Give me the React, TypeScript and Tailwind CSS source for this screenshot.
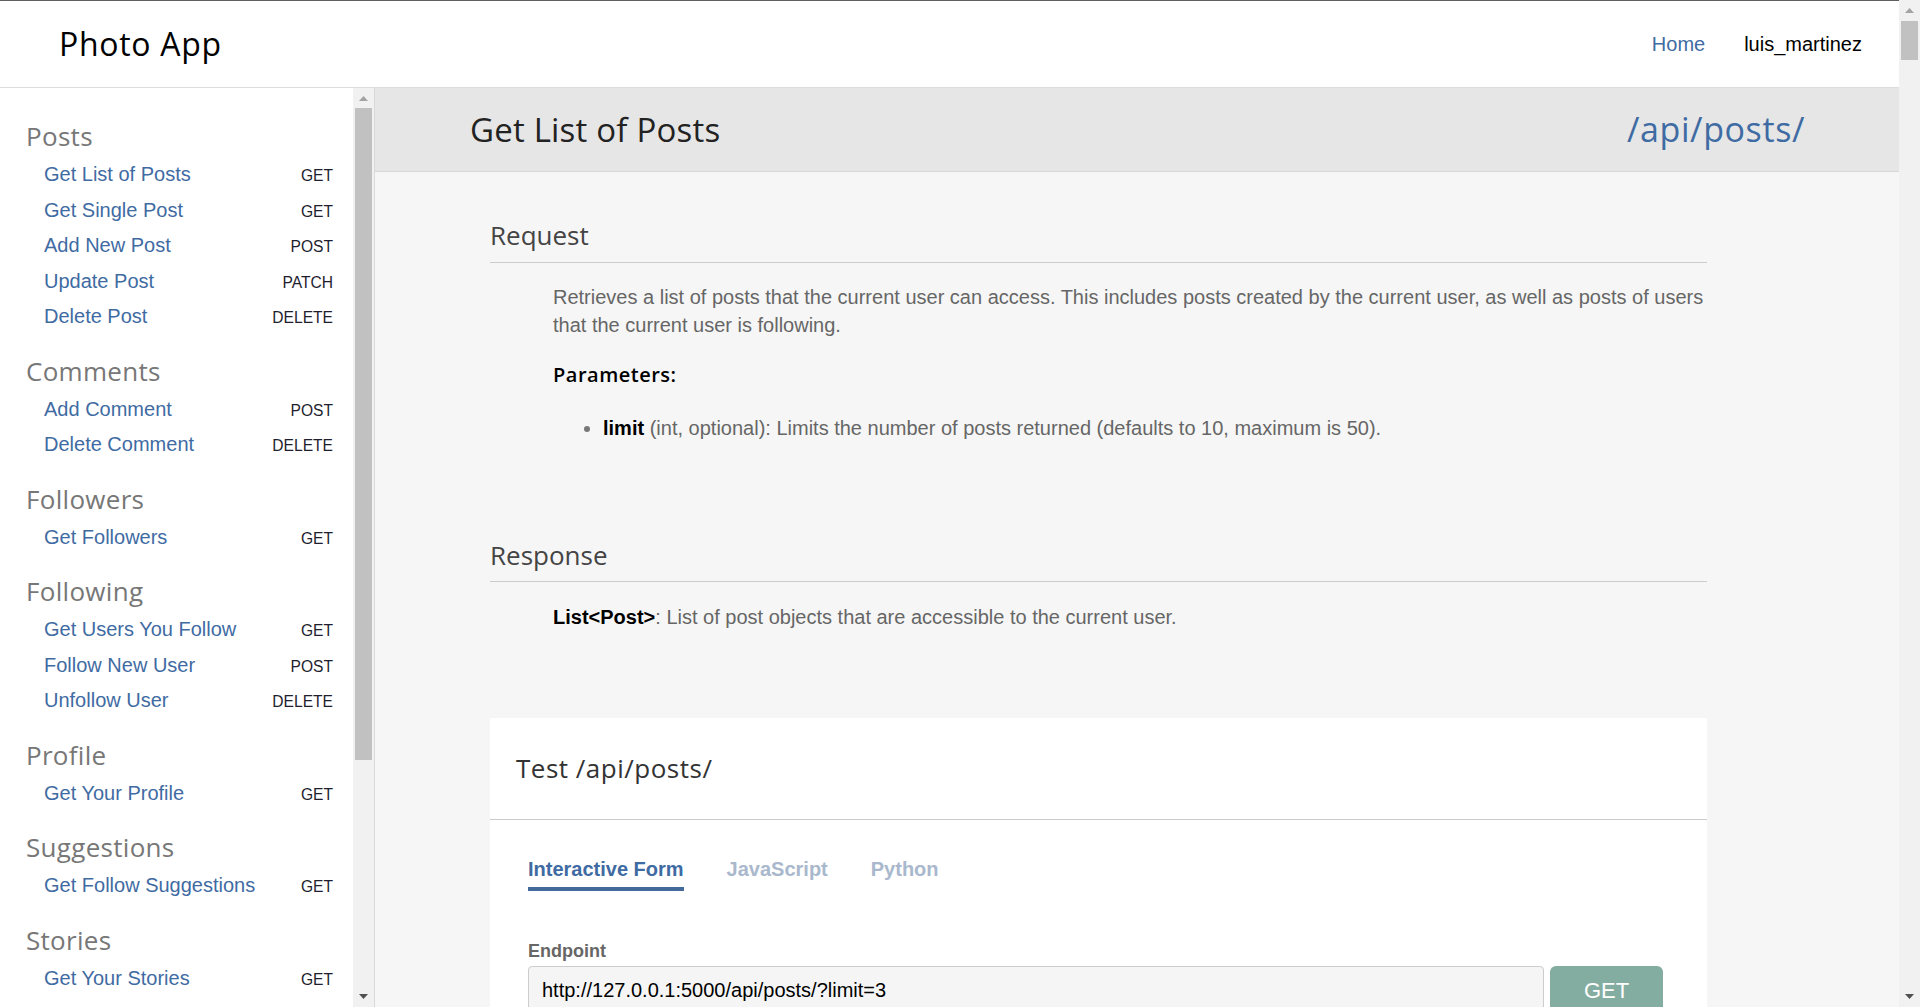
import React from "react";

type Endpoint = { name: string; method: string };
type Section = { title: string; items: Endpoint[] };

const sections: Section[] = [
  {
    title: "Posts",
    items: [
      { name: "Get List of Posts", method: "GET" },
      { name: "Get Single Post", method: "GET" },
      { name: "Add New Post", method: "POST" },
      { name: "Update Post", method: "PATCH" },
      { name: "Delete Post", method: "DELETE" },
    ],
  },
  {
    title: "Comments",
    items: [
      { name: "Add Comment", method: "POST" },
      { name: "Delete Comment", method: "DELETE" },
    ],
  },
  { title: "Followers", items: [{ name: "Get Followers", method: "GET" }] },
  {
    title: "Following",
    items: [
      { name: "Get Users You Follow", method: "GET" },
      { name: "Follow New User", method: "POST" },
      { name: "Unfollow User", method: "DELETE" },
    ],
  },
  { title: "Profile", items: [{ name: "Get Your Profile", method: "GET" }] },
  { title: "Suggestions", items: [{ name: "Get Follow Suggestions", method: "GET" }] },
  { title: "Stories", items: [{ name: "Get Your Stories", method: "GET" }] },
];

const heading = { fontFamily: "'Open Sans', 'Liberation Sans', sans-serif" };

// windows-style scrollbar, drawn since the headless browser hides real ones
const Scrollbar = ({ thumbTop, thumbHeight }: { thumbTop: number; thumbHeight: number }) => {
  return (
    <div className="w-[21px] shrink-0 h-full bg-[#f1f1f1] flex flex-col">
      <div className="h-[20px] shrink-0 flex items-center justify-center">
        <svg width="9" height="5" viewBox="0 0 9 5">
          <path d="M0 5 L4.5 0 L9 5 Z" fill="#a3a3a3" />
        </svg>
      </div>
      <div className="flex-1">
        <div style={{ height: thumbTop }} />
        <div className="mx-[2px] bg-[#c1c1c1]" style={{ height: thumbHeight }} />
      </div>
      <div className="h-[21px] shrink-0 flex items-center justify-center">
        <svg width="9" height="5" viewBox="0 0 9 5">
          <path d="M0 0 L9 0 L4.5 5 Z" fill="#505050" />
        </svg>
      </div>
    </div>
  );
};

const Sidebar = () => {
  return (
    <aside className="w-[375px] shrink-0 h-[919px] flex bg-white border-r border-[#d9d9d9]">
      <div className="w-[353px] overflow-hidden pt-[33px] pl-[26px] pr-[20px]">
        {sections.map((section, index) => {
          return (
            <div key={index} className="mb-[21px]">
              <h2
                style={heading}
                className="text-[26px] leading-[30px] tracking-[0.3px] text-[#777777] mb-[6px]"
              >
                {section.title}
              </h2>
              {section.items.map((item, i) => (
                <div
                  key={i}
                  className="h-[35.5px] flex items-baseline justify-between pl-[18px]"
                >
                  <a className="text-[20px] leading-[35px] text-[#3f6ba3] cursor-pointer whitespace-nowrap">
                    {item.name}
                  </a>
                  <span className="text-[15.6px] text-[#1e1e2e]">{item.method}</span>
                </div>
              ))}
            </div>
          );
        })}
      </div>
      <Scrollbar thumbTop={0} thumbHeight={652} />
    </aside>
  );
};

const App = () => {
  return (
    <div
      className="h-screen overflow-hidden flex bg-[#f6f6f6]"
      style={{ fontFamily: "'Liberation Sans', Arial, sans-serif" }}
    >
      <div className="flex-1 min-w-0 border-t border-[#5f5f5f]">
        <header className="h-[87px] bg-white border-b border-[#dddddd] flex items-center justify-between pl-[59px] pr-[37px]">
          <h1 style={heading} className="text-[32px] tracking-[0.7px] text-black">
            Photo App
          </h1>
          <nav className="flex items-center gap-[39px] text-[20px]">
            <a className="text-[#3f6ba3] cursor-pointer">Home</a>
            <span className="text-black">luis_martinez</span>
          </nav>
        </header>
        <div className="flex">
          <Sidebar />
          <main className="flex-1 min-w-0 h-[919px] overflow-hidden">
            <div className="h-[84px] bg-[#e6e6e6] border-b border-[#d8d8d8] flex items-center justify-between pl-[95px] pr-[94px]">
              <h1 style={heading} className="text-[33px] tracking-[0.2px] text-[#222222]">
                Get List of Posts
              </h1>
              <span style={heading} className="text-[34px] tracking-[0.6px] text-[#3f6ba3]">
                /api/posts/
              </span>
            </div>

            <div className="pl-[115px] w-[1332px]">
              <section className="mt-[48px]">
                <h2
                  style={heading}
                  className="text-[26px] leading-[30px] text-[#444444] pb-[12px] border-b border-[#cccccc]"
                >
                  Request
                </h2>
                <div className="pl-[63px] pt-[20px]">
                  <p className="w-[1175px] text-[20px] leading-[28px] text-[#666666]">
                    Retrieves a list of posts that the current user can access. This includes
                    posts created by the current user, as well as posts of users that the
                    current user is following.
                  </p>
                  <h3
                    style={heading}
                    className="mt-[23px] text-[20px] leading-[26px] tracking-[0.5px] text-black font-semibold"
                  >
                    Parameters:
                  </h3>
                  <ul className="mt-[26px] pl-[50px] list-disc marker:text-[#777777]">
                    <li className="text-[20px] leading-[28px] text-[#666666]">
                      <strong className="text-black">limit</strong> (int, optional): Limits the
                      number of posts returned (defaults to 10, maximum is 50).
                    </li>
                  </ul>
                </div>
              </section>

              <section className="mt-[98px]">
                <h2
                  style={heading}
                  className="text-[26px] leading-[30px] text-[#444444] pb-[11px] border-b border-[#cccccc]"
                >
                  Response
                </h2>
                <p className="pl-[63px] pt-[21px] text-[20px] leading-[28px] text-[#666666]">
                  <strong className="text-black">List&lt;Post&gt;</strong>: List of post objects
                  that are accessible to the current user.
                </p>
              </section>

              <section className="mt-[87px] bg-white">
                <div className="px-[26px] pt-[35px] pb-[36px] border-b border-[#cccccc]">
                  <h2
                    style={heading}
                    className="text-[26px] leading-[30px] tracking-[0.5px] text-[#333333]"
                  >
                    Test /api/posts/
                  </h2>
                </div>
                <div className="pl-[38px] pr-[44px] pt-[37px] pb-[40px]">
                  <div className="flex gap-[43px] font-bold text-[20px] leading-[24px]">
                    <div className="flex flex-col">
                      <span className="text-[#3f6ba3]">Interactive Form</span>
                      <span className="mt-[6px] h-[4px] bg-[#436a9a]" />
                    </div>
                    <span className="text-[#a9b8cc]">JavaScript</span>
                    <span className="text-[#a9b8cc]">Python</span>
                  </div>
                  <label className="block mt-[50px] text-[18px] leading-[20px] font-bold text-[#666666]">
                    Endpoint
                  </label>
                  <div className="mt-[5px] flex gap-[6px]">
                    <input
                      readOnly
                      value="http://127.0.0.1:5000/api/posts/?limit=3"
                      className="flex-1 h-[48px] px-[13px] text-[20px] text-black bg-[#f5f5f5] border border-[#cccccc] rounded-[4px] outline-none"
                    />
                    <button className="w-[113px] h-[48px] bg-[#84ada2] text-white text-[22px] rounded-[6px]">
                      GET
                    </button>
                  </div>
                </div>
              </section>
            </div>
          </main>
        </div>
      </div>
      <Scrollbar thumbTop={1} thumbHeight={39} />
    </div>
  );
};

export default App;
